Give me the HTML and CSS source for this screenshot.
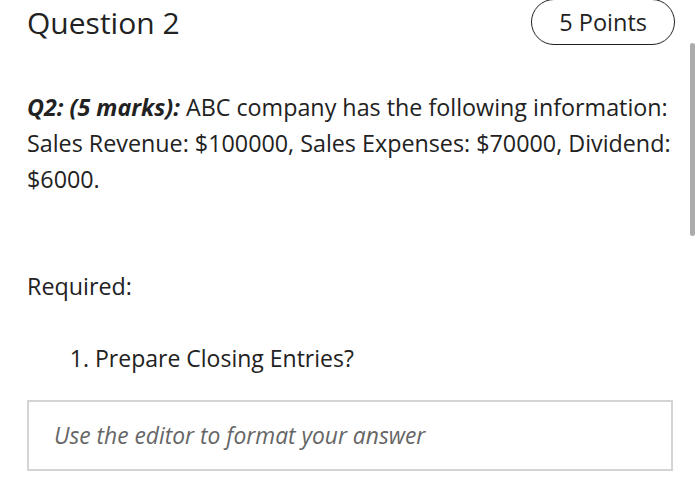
FILE: index.html
```html
<!DOCTYPE html>
<html lang="en">
<head>
<meta charset="utf-8">
<title>Question 2</title>
<link rel="stylesheet" href="styles.css">
</head>
<body>
<main class="question">
  <header class="question-head">
    <h1 class="question-title">Question 2</h1>
    <span class="points">5 Points</span>
  </header>
  <p class="prompt"><b class="prompt-label">Q2: (5 marks):</b> ABC company has the following information: Sales Revenue: $100000, Sales Expenses: $70000, Dividend: $6000.</p>
  <p class="required">Required:</p>
  <ol class="tasks">
    <li>Prepare Closing Entries?</li>
  </ol>
  <div class="answer">
    <span class="placeholder">Use the editor to format your answer</span>
  </div>
</main>
<div class="scrollbar"></div>
</body>
</html>
```
FILE: styles.css
```css
html, body {
  margin: 0;
  padding: 0;
  background: #fff;
}
body {
  font-family: "Open Sans", "Noto Sans", sans-serif;
  color: #222;
  width: 700px;
  height: 489px;
  overflow: hidden;
  position: relative;
}
.question {
  padding: 0 27px;
}
.question-head {
  display: flex;
  justify-content: space-between;
  align-items: center;
  height: 45px;
}
.question-title {
  margin: 0;
  font-size: 30px;
  font-weight: 500;
  line-height: 1;
}
.points {
  box-sizing: border-box;
  height: 46px;
  margin-top: -2px;
  margin-right: -2px;
  padding: 0 27px;
  display: flex;
  align-items: center;
  border: 1.5px solid #222;
  border-radius: 23px;
  font-size: 23.5px;
}
.prompt {
  margin: 44px -8px 0 0;
  font-size: 23.3px;
  line-height: 36px;
}
.prompt-label {
  font-weight: 700;
  font-style: italic;
}
.required {
  margin: 71px 0 0;
  font-size: 23.3px;
  line-height: 36px;
}
.tasks {
  margin: 36px 0 0;
  padding-left: 68px;
  font-size: 23px;
  line-height: 36px;
}
.answer {
  margin-top: 24px;
  box-sizing: border-box;
  height: 71px;
  border: 2px solid #d4d4d4;
  padding: 0 25px;
  display: flex;
  align-items: center;
}
.placeholder {
  font-size: 22.8px;
  font-style: italic;
  color: #666;
}
.scrollbar {
  position: absolute;
  left: 690px;
  top: 43px;
  width: 5px;
  height: 193px;
  border-radius: 3px;
  background: #ababab;
}
```
